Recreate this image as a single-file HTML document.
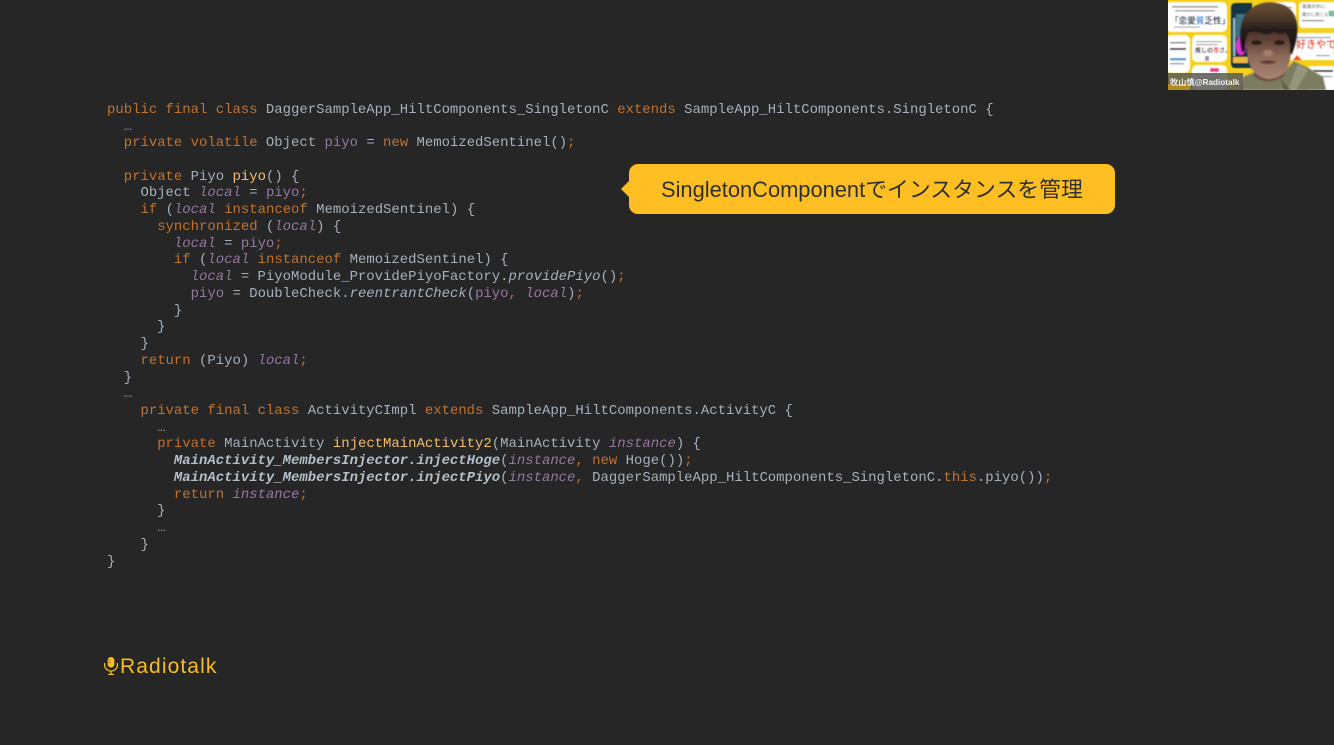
<!DOCTYPE html>
<html lang="ja">
<head>
<meta charset="utf-8">
<title>Radiotalk slide</title>
<style>
html,body{margin:0;padding:0;background:#262626;}
body{width:1334px;height:745px;position:relative;overflow:hidden;}
pre{position:absolute;left:107px;top:101.8px;margin:0;font:13.95px/16.74px "Liberation Mono",monospace;color:#a4b0bd;}
.k{color:#c0722f}.v{color:#94779f}.f{color:#f3bf6b}.i{font-style:italic}.b{font-weight:bold;font-style:italic;color:#b3bfcb}.d{color:#8d97a2}
#call{position:absolute;left:629px;top:164px;width:486px;height:50px;background:#ffbf22;border-radius:9px;}
#arrow{position:absolute;left:621px;top:181px;width:0;height:0;border-top:8px solid transparent;border-bottom:8px solid transparent;border-right:8px solid #ffbf22;}
#calltext{position:absolute;left:32px;top:0;line-height:51px;font-size:21.87px;color:#2f3030;font-family:"Liberation Sans","Noto Sans CJK JP",sans-serif;white-space:nowrap;}
#logo{position:absolute;left:120px;top:654px;font:21px/25px "Liberation Sans",sans-serif;letter-spacing:1.1px;color:#f8bd24;white-space:nowrap;}
svg{position:absolute;display:block;}
</style>
</head>
<body>
<pre><span class="k">public final class</span> DaggerSampleApp_HiltComponents_SingletonC <span class="k">extends</span> SampleApp_HiltComponents.SingletonC {
  <span class="d">…</span>
  <span class="k">private volatile</span> Object <span class="v">piyo</span> = <span class="k">new</span> MemoizedSentinel()<span class="k">;</span>

  <span class="k">private</span> Piyo <span class="f">piyo</span>() {
    Object <span class="v i">local</span> = <span class="v">piyo</span><span class="k">;</span>
    <span class="k">if</span> (<span class="v i">local</span> <span class="k">instanceof</span> MemoizedSentinel) {
      <span class="k">synchronized</span> (<span class="v i">local</span>) {
        <span class="v i">local</span> = <span class="v">piyo</span><span class="k">;</span>
        <span class="k">if</span> (<span class="v i">local</span> <span class="k">instanceof</span> MemoizedSentinel) {
          <span class="v i">local</span> = PiyoModule_ProvidePiyoFactory.<span class="i">providePiyo</span>()<span class="k">;</span>
          <span class="v">piyo</span> = DoubleCheck.<span class="i">reentrantCheck</span>(<span class="v">piyo</span><span class="k">,</span> <span class="v i">local</span>)<span class="k">;</span>
        }
      }
    }
    <span class="k">return</span> (Piyo) <span class="v i">local</span><span class="k">;</span>
  }
  <span class="d">…</span>
    <span class="k">private final class</span> ActivityCImpl <span class="k">extends</span> SampleApp_HiltComponents.ActivityC {
      <span class="d">…</span>
      <span class="k">private</span> MainActivity <span class="f">injectMainActivity2</span>(MainActivity <span class="v i">instance</span>) {
        <span class="b">MainActivity_MembersInjector.injectHoge</span>(<span class="v i">instance</span><span class="k">,</span> <span class="k">new</span> Hoge())<span class="k">;</span>
        <span class="b">MainActivity_MembersInjector.injectPiyo</span>(<span class="v i">instance</span><span class="k">,</span> DaggerSampleApp_HiltComponents_SingletonC.<span class="k">this</span>.piyo())<span class="k">;</span>
        <span class="k">return</span> <span class="v i">instance</span><span class="k">;</span>
      }
      <span class="d">…</span>
    }
}</pre>

<div id="arrow"></div>
<div id="call"><div id="calltext">SingletonComponentでインスタンスを管理</div></div>

<svg style="left:103px;top:656px" width="16" height="20" viewBox="0 0 16 20">
  <rect x="4.6" y="1" width="6.8" height="10.5" rx="3.4" fill="#f8bd24"/>
  <path d="M5.5 4h2M5.5 6.5h2" stroke="#7a5f18" stroke-width=".8"/>
  <path d="M1.6 7.5v1.2a6.4 6.4 0 0 0 12.8 0V7.5" fill="none" stroke="#f8bd24" stroke-width="1.3" stroke-linecap="round"/>
  <path d="M8 15v3M5.6 18.4h4.8" fill="none" stroke="#f8bd24" stroke-width="1.3" stroke-linecap="round"/>
</svg>
<div id="logo">Radiotalk</div>

<svg style="left:1168px;top:0" width="166" height="90" viewBox="1168 0 166 90">
  <defs>
    <filter id="bl" x="-10%" y="-10%" width="120%" height="120%"><feGaussianBlur stdDeviation="0.8"/></filter>
    <filter id="sb" x="-10%" y="-10%" width="120%" height="120%"><feGaussianBlur stdDeviation="0.4"/></filter>
    <linearGradient id="face" x1="0" y1="0" x2="0" y2="1">
      <stop offset="0" stop-color="#33241e"/><stop offset=".32" stop-color="#5a3f34"/><stop offset=".62" stop-color="#8d6959"/><stop offset="1" stop-color="#a98572"/>
    </linearGradient>
    <linearGradient id="hair" x1="0" y1="0" x2="0" y2="1">
      <stop offset="0" stop-color="#6a5036"/><stop offset=".28" stop-color="#4e3a2a"/><stop offset=".55" stop-color="#241c1a"/><stop offset="1" stop-color="#171312"/>
    </linearGradient>
  </defs>
  <rect x="1168" y="0" width="166" height="90" fill="#f6cf1c"/>
  <g filter="url(#sb)">
    <rect x="1166" y="2" width="61" height="30" rx="5" fill="#fff"/>
    <rect x="1166" y="35" width="24" height="38" rx="5" fill="#fff"/>
    <rect x="1192" y="35" width="35" height="27" rx="5" fill="#fff"/>
    <rect x="1192" y="65" width="35" height="25" rx="5" fill="#fff"/>
    <rect x="1273" y="2" width="23" height="26" rx="4" fill="#fff"/>
    <rect x="1299" y="2" width="37" height="26" rx="4" fill="#fff"/>
    <rect x="1288" y="33" width="46" height="27" fill="#fff"/>
    <rect x="1309" y="66" width="27" height="24" fill="#fff"/>
    <path d="M1231 8q0-5 5-5h16v65h-17q-4 0-4-5z" fill="#163640"/>
    <rect x="1236" y="14" width="10" height="24" fill="#3d6f85"/>
    <rect x="1233" y="18" width="2.4" height="38" fill="#8db4c0"/>
    <ellipse cx="1241" cy="46" rx="5" ry="9" fill="#e332d8"/>
    <rect x="1233" y="57" width="15" height="6" fill="#f0b840"/>
    <text x="1170" y="23.5" font-family="'Liberation Sans','Noto Sans CJK JP',sans-serif" font-weight="bold" font-size="8.6" fill="#28435a">「恋愛<tspan fill="#3a8be0">貧</tspan>乏性」</text>
    <rect x="1172" y="6" width="46" height="1.6" fill="#9a9a9a"/>
    <rect x="1175" y="10" width="40" height="1.6" fill="#a8a8a8"/>
    <rect x="1174" y="26.5" width="26" height="1.2" fill="#aaaaaa"/>
    <text x="1195" y="52.5" font-family="'Liberation Sans','Noto Sans CJK JP',sans-serif" font-weight="bold" font-size="6" fill="#333">推しの<tspan fill="#e04a40">尊</tspan>さ。</text>
    <rect x="1196" y="41" width="26" height="1.2" fill="#aaa"/>
    <rect x="1196" y="44" width="22" height="1.2" fill="#aaa"/>
    <rect x="1205" y="56" width="4" height="5" fill="#999"/>
    <rect x="1170" y="42" width="16" height="1.4" fill="#777"/>
    <rect x="1170" y="48" width="16" height="2" fill="#444"/>
    <rect x="1170" y="58" width="16" height="2.4" fill="#4c9bd9"/>
    <rect x="1170" y="63" width="14" height="1.4" fill="#999"/>
    <rect x="1210" y="68" width="9" height="4" fill="#ee3f8f"/>
    <rect x="1195" y="74" width="26" height="1.3" fill="#aaa"/>
    <rect x="1195" y="78" width="24" height="1.3" fill="#aaa"/>
    <text x="1302" y="8" font-family="'Liberation Sans','Noto Sans CJK JP',sans-serif" font-size="4.6" fill="#333">昼食の中に、</text>
    <text x="1302" y="16" font-family="'Liberation Sans','Noto Sans CJK JP',sans-serif" font-size="4.4" fill="#555">確かに感じる<tspan fill="#1d9c6a" font-weight="bold" font-size="6">職人技</tspan></text>
    <rect x="1302" y="20" width="22" height="1.3" fill="#888"/>
    <rect x="1276" y="7" width="16" height="1.2" fill="#888"/>
    <rect x="1284" y="12" width="8" height="2" fill="#5a78c8"/>
    <rect x="1276" y="18" width="14" height="1.2" fill="#999"/>
    <text x="1296" y="48" font-family="'Liberation Sans','Noto Sans CJK JP',sans-serif" font-weight="bold" font-size="10" fill="#ea4a36">好きやで</text>
    <rect x="1293" y="37" width="38" height="1.2" fill="#999"/>
    <rect x="1316" y="55" width="14" height="1.2" fill="#999"/>
    <rect x="1313" y="70" width="20" height="2" fill="#333"/>
    <rect x="1316" y="76" width="16" height="1.2" fill="#999"/>
    <path d="M1293 60l4-5 5 5z" fill="#e8552c"/>
  </g>
  <g filter="url(#bl)">
    <path d="M1241 90l2-13 12-5 30-1 9-10 16 8 13 8 3 13z" fill="#7c7d60"/>
    <path d="M1298 64l-10 26h8l12-20z" fill="#96977a"/>
    <path d="M1280 78l10 12h-6z" fill="#5c5e46"/>
    <path d="M1254 62v14q13 11 30 0l1-14z" fill="#6a4a3c"/>
    <path d="M1246 34q0 28 7 37 7 8 16 8 10 0 17-8 6-10 6-37-2-14-23-14-21 0-23 14z" fill="url(#face)"/>
    <path d="M1242 52q-6-30 8-43 12-9 27-6 17 3 20 20 2 14-5 31l-2 0q1-15-4-21-8 2-12-1-6 4-14 1-8-2-12 0-3 6-3 18z" fill="url(#hair)"/>
    <path d="M1252 41q5-2 9 0l1 3q-6 2-11 0zM1275 41q5-2 9 0l1 3q-6 2-11 0z" fill="#2a1c18"/>
    <ellipse cx="1268" cy="53" rx="5" ry="3.5" fill="#a47c68"/>
    <path d="M1259 62q9-3 18 0-9 4-18 0z" fill="#5f352e"/>
  </g>
  <rect x="1168" y="73" width="75" height="17" fill="#5a5a58" fill-opacity=".85"/>
  <rect x="1168" y="84" width="22" height="6" fill="#b6911f" opacity=".9"/>
  <text x="1170" y="85" font-family="'Liberation Sans','Noto Sans CJK JP',sans-serif" font-size="8.2" font-weight="bold" fill="#f0f0f0">牧山慎@Radiotalk</text>
</svg>
</body>
</html>
